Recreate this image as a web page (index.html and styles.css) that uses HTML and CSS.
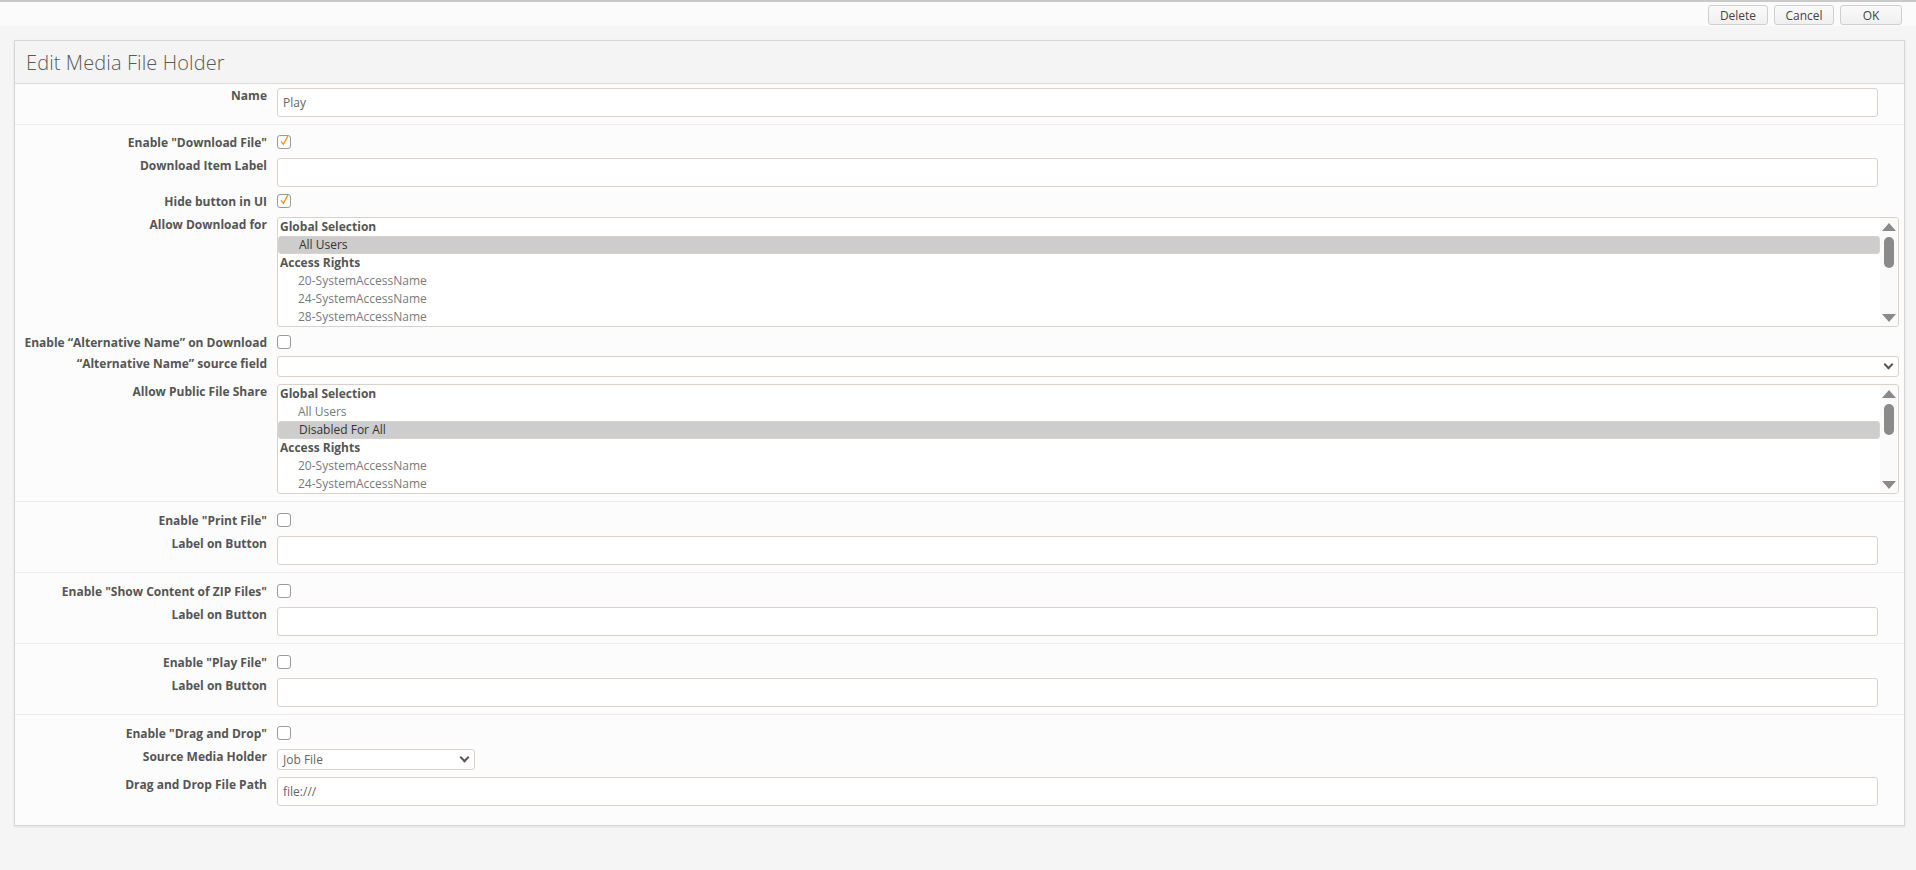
FILE: index.html
```html
<!DOCTYPE html>
<html lang="en">
<head>
<meta charset="UTF-8">
<title>Edit Media File Holder</title>
<link rel="stylesheet" href="styles.css">
</head>
<body>

<div class="topline"></div>

<div class="toolbar">
  <button class="tbtn">Delete</button>
  <button class="tbtn">Cancel</button>
  <button class="tbtn okBtn">OK</button>
</div>

<main class="page">

<section class="panel">

<header class="panelHead">
  <h1 class="title">Edit Media File Holder</h1>
</header>

<!-- name -->
<div class="group groupFirst">
  <div class="row">
    <label class="lbl">Name</label>
    <div class="ctrl"><input type="text" class="txt" value="Play"></div>
  </div>
</div>

<!-- download -->
<div class="group groupDownload">
  <div class="row rowCheck">
    <label class="lbl">Enable "Download File"</label>
    <div class="ctrl"><span class="cb checked"><svg viewBox="0 0 14 14"><path d="M3.2 7.4 L5.8 10.6 L10.6 1.8"/></svg></span></div>
  </div>
  <div class="row">
    <label class="lbl">Download Item Label</label>
    <div class="ctrl"><input type="text" class="txt"></div>
  </div>
  <div class="row rowCheck">
    <label class="lbl">Hide button in UI</label>
    <div class="ctrl"><span class="cb checked"><svg viewBox="0 0 14 14"><path d="M3.2 7.4 L5.8 10.6 L10.6 1.8"/></svg></span></div>
  </div>
  <div class="row rowList">
    <label class="lbl">Allow Download for</label>
    <div class="ctrl">
      <div class="listBox">
        <ul class="opts">
          <li class="optGroup">Global Selection</li>
          <li class="opt sel">All Users</li>
          <li class="optGroup">Access Rights</li>
          <li class="opt">20-SystemAccessName</li>
          <li class="opt">24-SystemAccessName</li>
          <li class="opt">28-SystemAccessName</li>
        </ul>
        <div class="sbar">
          <span class="arrUp"></span>
          <div class="track"><span class="thumb"></span></div>
          <span class="arrDown"></span>
        </div>
      </div>
    </div>
  </div>
  <div class="row rowCheck rowTight">
    <label class="lbl">Enable “Alternative Name” on Download</label>
    <div class="ctrl"><span class="cb"></span></div>
  </div>
  <div class="row">
    <label class="lbl">“Alternative Name” source field</label>
    <div class="ctrl"><div class="sel wide"><span class="selText"></span><span class="chev"></span></div></div>
  </div>
  <div class="row">
    <label class="lbl">Allow Public File Share</label>
    <div class="ctrl">
      <div class="listBox">
        <ul class="opts">
          <li class="optGroup">Global Selection</li>
          <li class="opt">All Users</li>
          <li class="opt sel">Disabled For All</li>
          <li class="optGroup">Access Rights</li>
          <li class="opt">20-SystemAccessName</li>
          <li class="opt">24-SystemAccessName</li>
        </ul>
        <div class="sbar">
          <span class="arrUp"></span>
          <div class="track"><span class="thumb"></span></div>
          <span class="arrDown"></span>
        </div>
      </div>
    </div>
  </div>
</div>

<!-- print -->
<div class="group">
  <div class="row rowCheck">
    <label class="lbl">Enable "Print File"</label>
    <div class="ctrl"><span class="cb"></span></div>
  </div>
  <div class="row">
    <label class="lbl">Label on Button</label>
    <div class="ctrl"><input type="text" class="txt"></div>
  </div>
</div>

<!-- zip -->
<div class="group">
  <div class="row rowCheck">
    <label class="lbl">Enable "Show Content of ZIP Files"</label>
    <div class="ctrl"><span class="cb"></span></div>
  </div>
  <div class="row">
    <label class="lbl">Label on Button</label>
    <div class="ctrl"><input type="text" class="txt"></div>
  </div>
</div>

<!-- play -->
<div class="group">
  <div class="row rowCheck">
    <label class="lbl">Enable "Play File"</label>
    <div class="ctrl"><span class="cb"></span></div>
  </div>
  <div class="row">
    <label class="lbl">Label on Button</label>
    <div class="ctrl"><input type="text" class="txt"></div>
  </div>
</div>

<!-- drag and drop -->
<div class="group groupLast">
  <div class="row rowCheck">
    <label class="lbl">Enable "Drag and Drop"</label>
    <div class="ctrl"><span class="cb"></span></div>
  </div>
  <div class="row">
    <label class="lbl">Source Media Holder</label>
    <div class="ctrl"><div class="sel small"><span class="selText">Job File</span><span class="chev"></span></div></div>
  </div>
  <div class="row">
    <label class="lbl">Drag and Drop File Path</label>
    <div class="ctrl"><input type="text" class="txt" value="file:///"></div>
  </div>
</div>

</section>

</main>

</body>
</html>
```

FILE: styles.css
```css
*,*:before,*:after{
margin:0;
padding:0;
box-sizing:border-box;
}

:root{
--page_bg:#f5f5f5;
--panel_bg:#fcfcfc;
--line:#ececec;
--field_border:#d9d2cc;
--label_color:#555;
--opt_color:#7a7a7a;
--check_color:#f7941d;
}

html,body{
height:100%;
}

body{
background:var(--page_bg);
font-family:"Open Sans", "Liberation Sans", sans-serif;
font-size:12px;
color:var(--label_color);
overflow:hidden;
}

ul{
list-style:none;
}

/* top bar */
.topline{
height:2px;
background:#c9c9c9;
box-shadow:0 1px 2px #ddd;
}

.toolbar{
height:24px;
padding:3px 14px 0 0;
display:flex;
justify-content:flex-end;
gap:6px;
background:#fbfbfb;
}

.tbtn{
height:20px;
width:60px;
font-family:inherit;
font-size:12px;
color:#444;
background:linear-gradient(#fafafa, #f0f0f0);
border:1px solid #cfcfcf;
border-radius:3px;
}

.okBtn{
width:62px;
}

/* panel */
.page{
padding:14px 11px 0 14px;
}

.panel{
background:var(--panel_bg);
border:1px solid #d6d6d6;
box-shadow:0 1px 2px #e0e0e0;
}

.panelHead{
height:43px;
padding:0 11px;
display:flex;
align-items:center;
background:#f4f4f4;
border-bottom:1px solid #dedede;
}

.title{
font-size:20px;
font-weight:300;
color:#5a5a5a;
letter-spacing:0.1px;
}

.group{
padding:11px 5px 7px 0;
border-bottom:1px solid var(--line);
display:flex;
flex-direction:column;
gap:7px;
}

.groupFirst{
padding-top:4px;
}

.groupDownload{
padding-top:10px;
padding-bottom:7px;
}

.groupLast{
border-bottom:none;
padding-bottom:19px;
}

.row{
display:grid;
grid-template-columns:262px 1fr;
align-items:start;
}

.rowList{
margin-bottom:1px;
}

.rowTight{
margin-bottom:-2px;
}

.lbl{
padding-right:10px;
text-align:right;
font-weight:bold;
line-height:16px;
color:var(--label_color);
white-space:nowrap;
}

.ctrl{
min-height:16px;
}

.txt{
display:block;
width:calc(100% - 21px);
height:29px;
padding:0 5px;
font-family:inherit;
font-size:12px;
color:#666;
background:#fff;
border:1px solid var(--field_border);
border-radius:3px;
outline:none;
}

/* checkbox */
.cb{
display:block;
width:14px;
height:14px;
background:#fff;
border:1px solid #9a9a9a;
border-radius:3px;
position:relative;
}

.cb svg{
position:absolute;
left:0;
top:-2px;
width:13px;
height:14px;
fill:none;
stroke:var(--check_color);
stroke-width:1.5;
}

/* select */
.sel{
height:21px;
display:flex;
align-items:center;
justify-content:space-between;
padding:0 6px 0 5px;
background:#fff;
border:1px solid var(--field_border);
border-radius:3px;
color:#666;
}

.small{
width:198px;
}

.chev{
width:7px;
height:7px;
border-right:2px solid #555;
border-bottom:2px solid #555;
transform:translateY(-2px) rotate(45deg);
}

/* list box */
.listBox{
display:flex;
height:110px;
background:#fff;
border:1px solid var(--field_border);
border-radius:3px;
overflow:hidden;
}

.opts{
flex:1;
padding-top:0;
}

.opts li{
height:18px;
line-height:18px;
white-space:nowrap;
}

.optGroup{
padding-left:2px;
font-weight:bold;
color:var(--label_color);
}

.opt{
padding-left:20px;
color:var(--opt_color);
}

.opt.sel{
background:#cdcdcd;
color:#333;
}

.sbar{
width:18px;
background:#fafafa;
display:flex;
flex-direction:column;
align-items:center;
padding:5px 0 4px;
}

.arrUp,.arrDown{
width:0;
height:0;
border-left:7px solid transparent;
border-right:7px solid transparent;
}

.arrUp{
border-bottom:8px solid #8a8a8a;
}

.arrDown{
border-top:8px solid #8a8a8a;
}

.track{
flex:1;
width:100%;
display:flex;
justify-content:center;
padding-top:6px;
}

.thumb{
width:10px;
height:31px;
border-radius:5px;
background:#8a8a8a;
}
```
